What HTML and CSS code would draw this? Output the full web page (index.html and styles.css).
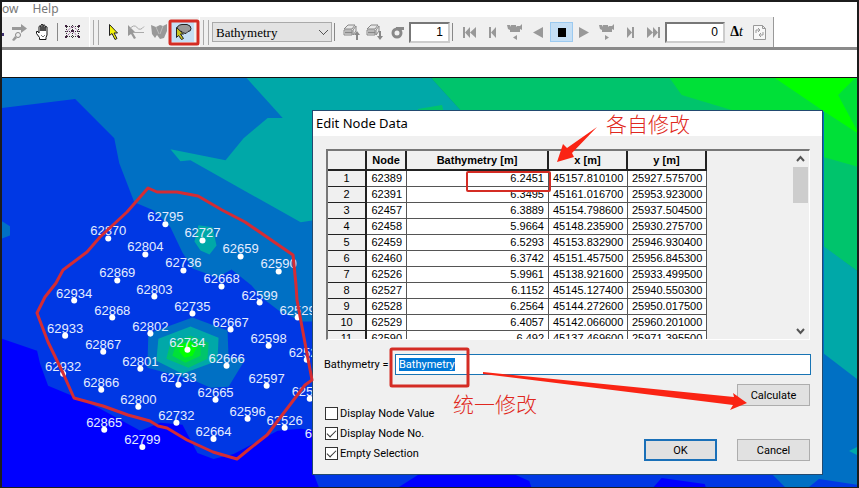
FILE: index.html
```html
<!DOCTYPE html>
<html lang="en">
<head>
<meta charset="utf-8">
<title>Edit Node Data</title>
<link rel="stylesheet" href="styles.css">
</head>
<body>
<div class="app">
  <nav class="menubar"><a href="#">ow</a><a href="#">Help</a></nav>

  <div class="toolbar">
    <div class="group">
      <span class="cut"></span>
      <button class="tool" aria-label="Zoom next"><svg viewBox="0 0 23 20"><g fill="#999"><path d="M4 5h9V2l6 4.500-6 4.500V8H4z"/><path d="M7 14l2 2-3 3-2-1z"/></g><circle cx="10" cy="13" r="2.500" fill="#eee" stroke="#888"/></svg></button>
      <button class="tool" aria-label="Pan"><svg viewBox="0 0 23 20"><path d="M8.500 17.500v-2l-3-4v-2h1.500l1 1.500V4.500q1-1.500 2 0V9 3q1-1.500 2 0v6-5.500q1-1.500 2 0V9 5q1-1 2 0v8l-1 2.500v2z" fill="#fff" stroke="#111"/><path d="M10 13l2 2 2-2" stroke="#777" fill="none"/></svg></button>
      <span class="sep"></span>
      <button class="tool" aria-label="Mesh"><svg viewBox="0 0 23 20"><path d="M4 4.500h15M4 9.500h15M4 14.500h15M5.500 3v14M11.500 3v14M17.500 3v14" stroke="#333" stroke-dasharray="1 1"/><path d="M5 10l7-6 6 6M5 15l6-6 7 6" stroke="#a060a0" fill="none" stroke-dasharray="2 1"/><path d="M4 3h2v2H4zM10 8h3v2h-3zM17 3h2v2h-2zM4 14h2v2H4zM17 14h2v2h-2z" fill="#402040"/></svg></button>
    </div>
    <div class="group tools">
      <span class="grip"></span>
      <button class="tool" aria-label="Select"><svg viewBox="0 0 23 20"><path d="M7.500 2.500v11l2.500-2 3 6 2-1-3-5.500h3.500z" fill="#f2f20c" stroke="#222"/></svg></button>
      <button class="tool" aria-label="Select along line"><svg viewBox="0 0 23 20"><path d="M3 3v11l3-2 3 5 2-1-3-5h3z" fill="#999"/><path d="M4 7.500q5-6 8-2t7-1M8 10.500h11" stroke="#aaa" fill="none"/></svg></button>
      <button class="tool" aria-label="Select polygon"><svg viewBox="0 0 23 20"><path d="M3 3l5 2 4-2 3 1 4-2v7l-3 7-4 1-3-4-2 3-3-4z" fill="#999"/><path d="M8 5l3 7M15 4l-3 8" stroke="#bbb"/></svg></button>
      <button class="tool active" aria-label="Select by lasso" aria-pressed="true"><svg viewBox="0 0 23 20"><path d="M6 7q0-4 5-4.500h5q4 1 4 4 0 3-3 3l-2 2q-3 0-4-2-5 0-5-2.500z" fill="#999" stroke="#222"/><path d="M5.500 5.500v10l2-2 3 4 2-1-3-4.500h3z" fill="#c8c420" stroke="#222"/></svg></button>
    </div>
    <div class="group item">
      <span class="grip"></span>
      <select class="dataset" aria-label="Item"><option>Bathymetry</option></select>
      <span class="sep wide"></span>
      <button class="tool" aria-label="Layer up"><svg viewBox="0 0 23 20"><path d="M4 7l4-4h7l-3 4zM4 8h8v5H4zM13 8l3-4v5l-3 4z" fill="#e8e8e8" stroke="#888"/><path d="M5 10.500h7" stroke="#888" stroke-width="2"/><path d="M16 18v-5h-2l3-4 3 4h-2v5z" fill="#888"/></svg></button>
      <button class="tool" aria-label="Layer down"><svg viewBox="0 0 23 20"><path d="M4 7l4-4h7l-3 4zM4 8h8v5H4zM13 8l3-4v5l-3 4z" fill="#e8e8e8" stroke="#888"/><path d="M5 10.500h7" stroke="#888" stroke-width="2"/><path d="M16 9v5h-2l3 4 3-4h-2V9z" fill="#888"/></svg></button>
      <button class="tool" aria-label="Sigma layer"><svg viewBox="0 0 23 20"><path d="M10 6.500h8" stroke="#888" stroke-width="3"/><ellipse cx="11" cy="11" rx="4" ry="4" fill="none" stroke="#888" stroke-width="3"/></svg></button>
      <input class="field layer" aria-label="Layer" value="1">
      <span class="sep wide"></span>
      <button class="tool" aria-label="First step"><svg viewBox="0 0 23 20"><path d="M5 5h2v11H5zM12 5v11l-5-5.500zM18 5v11l-6-5.500z" fill="#999"/></svg></button>
      <button class="tool" aria-label="Previous step"><svg viewBox="0 0 23 20"><path d="M8 5h2v11H8zM15 5v11l-5-5.500z" fill="#999"/></svg></button>
      <button class="tool" aria-label="Record backwards"><svg viewBox="0 0 23 20"><path d="M3 3h3l1 2V3h5v2l1-1h3l2-2v6l-2-1v3H6V8L4 7zM13 13v5l-4-2.500z" fill="#999"/></svg></button>
      <button class="tool" aria-label="Play backwards"><svg viewBox="0 0 23 20"><path d="M16 5v11L6 10.500z" fill="#999"/></svg></button>
      <button class="tool active stop" aria-label="Stop" aria-pressed="true"><svg viewBox="0 0 23 20"><path d="M8 6h8v9H8z"/></svg></button>
      <button class="tool" aria-label="Play"><svg viewBox="0 0 23 20"><path d="M6 5v11l10-5.500z" fill="#999"/></svg></button>
      <button class="tool" aria-label="Record"><svg viewBox="0 0 23 20"><path d="M3 3h3l1 2V3h5v2l1-1h3l2-2v6l-2-1v3H6V8L4 7zM9 13v5l4-2.500z" fill="#999"/></svg></button>
      <button class="tool" aria-label="Next step"><svg viewBox="0 0 23 20"><path d="M13 5h2v11h-2zM8 5v11l5-5.500z" fill="#999"/></svg></button>
      <button class="tool" aria-label="Last step"><svg viewBox="0 0 23 20"><path d="M16 5h2v11h-2zM11 5v11l5-5.500zM5 5v11l6-5.500z" fill="#999"/></svg></button>
      <input class="field step" aria-label="Time step" value="0">
      <button class="tool delta" aria-label="Time step length"><b>Δ</b><i>t</i></button>
      <button class="tool" aria-label="Refresh"><svg viewBox="0 0 23 20"><path d="M5.500 3.500h9l3 3v11h-12zM14.500 3.500v3h3" fill="#f7f7f7" stroke="#999"/><path d="M8 11V8h4M10 6l2 2-2 2M15 10v3h-4M13 11l-2 2 2 2" fill="none" stroke="#999"/></svg></button>
    </div>
  </div>
  <div class="strip"></div>

  <main class="map">
    <svg class="mesh" viewBox="2 78 855 408" preserveAspectRatio="xMinYMin slice" role="img" aria-label="Bathymetry mesh">
      <path class="c3" d="M2 78h855v408H2z"/>
      <path class="c2" d="M2 108L75 99l39 39 5 25 15 39 19 8 17 17 12 25 10 16 25 9 14-8 20 16 10 12 17 13 23 11h13l20 151h435l14 14H2z"/>
      <path class="c2" d="M807 486l10-8 40 6v2z"/>
      <path class="c3" d="M2 221l8 5v9l-8 3z"/>
      <path class="c1" d="M2 338l35 12 3 13 8 22 24 10 28 13 40 22 20-8 22 2 15 28 16 6 20-5 44-23 23-2 13 2v43l5 13H2zM398 486l22-14h90l18 8 2 6zM652 486l8-9 43 6 1 3z"/>
      <path class="c4" d="M246 78l36 40h-15l-24 20-18 22-55-11 10 12 10-1 110 62 13-2V111h147l-30-33z"/>
      <path class="c5" d="M430 78l30 33-18-1-1-5-24 4v3h405v135l35 25V78z"/>
      <path class="c4" d="M822 246l35 26v108l-35-27zM847 450l10-5v10z"/>
      <path class="c6" d="M668 78l12 17 53 16h89v46l35 10V78z"/>
      <path class="c7" d="M773 78l50 34 34 22-21-39 17-17z"/>
      <path class="c3" d="M148 333l44-16 35 13 1 27 17 1-17 28-18 1-18-8-45-12z"/>
      <path class="c4" d="M158 338l32-12 28 11-1 23-35 13-26-13zM198 225l14 2 4 18-7 9-9-4-6-9z"/>
      <path class="c5" d="M170 342l20-7 18 7-1 16-19 9-22-9z"/>
      <path class="c6" d="M175 345l15-5 10 5v10l-15 7-13-7z"/>
      <path class="c7" d="M180 344l10-3 6 6-4 8-8 2-5-6z"/>
      <g class="dots">
        <circle cx="165" cy="224" r="3"/><circle cx="108" cy="238" r="3"/><circle cx="202" cy="240" r="3"/><circle cx="145" cy="254" r="3"/><circle cx="240" cy="256" r="3"/><circle cx="183" cy="270" r="3"/><circle cx="278" cy="271" r="3"/><circle cx="117" cy="280" r="3"/><circle cx="221" cy="286" r="3"/><circle cx="74" cy="300" r="3"/><circle cx="154" cy="296" r="3"/><circle cx="259" cy="302" r="3"/><circle cx="112" cy="317" r="3"/><circle cx="192" cy="313" r="3"/><circle cx="297" cy="317" r="3"/><circle cx="65" cy="335" r="3"/><circle cx="150" cy="333" r="3"/><circle cx="230" cy="329" r="3"/><circle cx="103" cy="351" r="3"/><circle cx="187" cy="349" r="3"/><circle cx="268" cy="345" r="3"/><circle cx="306" cy="359" r="3"/><circle cx="63" cy="373" r="3"/><circle cx="140" cy="368" r="3"/><circle cx="226" cy="365" r="3"/><circle cx="101" cy="389" r="3"/><circle cx="178" cy="384" r="3"/><circle cx="266" cy="385" r="3"/><circle cx="309" cy="398" r="3"/><circle cx="138" cy="406" r="3"/><circle cx="215" cy="399" r="3"/><circle cx="247" cy="418" r="3"/><circle cx="284" cy="427" r="3"/><circle cx="176" cy="422" r="3"/><circle cx="104" cy="429" r="3"/><circle cx="142" cy="446" r="3"/><circle cx="213" cy="438" r="3"/>
      </g>
      <g class="nodes">
        <text x="165" y="221">62795</text><text x="108" y="235">62870</text><text x="202" y="237">62727</text><text x="145" y="251">62804</text><text x="240" y="253">62659</text><text x="183" y="267">62736</text><text x="278" y="268">62590</text><text x="117" y="277">62869</text><text x="221" y="283">62668</text><text x="74" y="297">62934</text><text x="154" y="293">62803</text><text x="259" y="299">62599</text><text x="112" y="314">62868</text><text x="192" y="310">62735</text><text x="297" y="314">62529</text><text x="65" y="332">62933</text><text x="150" y="330">62802</text><text x="230" y="326">62667</text><text x="103" y="348">62867</text><text x="187" y="346">62734</text><text x="268" y="342">62598</text><text x="306" y="356">62528</text><text x="63" y="370">62932</text><text x="140" y="365">62801</text><text x="226" y="362">62666</text><text x="101" y="386">62866</text><text x="178" y="381">62733</text><text x="266" y="382">62597</text><text x="309" y="395">62527</text><text x="138" y="403">62800</text><text x="215" y="396">62665</text><text x="247" y="415">62596</text><text x="284" y="424">62526</text><text x="176" y="419">62732</text><text x="104" y="426">62865</text><text x="142" y="443">62799</text><text x="213" y="435">62664</text><text x="322" y="437">62460</text>
      </g>
    </svg>

    <section class="dialog" role="dialog" aria-labelledby="dialog-title">
      <h1 id="dialog-title">Edit Node Data</h1>
      <form class="content">
        <div class="grid">
          <div class="rows">
            <table>
              <colgroup><col class="w-num"><col class="w-node"><col class="w-value"><col class="w-pos"><col class="w-pos"></colgroup>
              <thead><tr><th></th><th>Node</th><th>Bathymetry [m]</th><th>x [m]</th><th>y [m]</th></tr></thead>
              <tbody>
                <tr><th>1</th><td>62389</td><td>6.2451</td><td>45157.810100</td><td>25927.575700</td></tr>
                <tr><th>2</th><td>62391</td><td>6.3495</td><td>45161.016700</td><td>25953.923000</td></tr>
                <tr><th>3</th><td>62457</td><td>6.3889</td><td>45154.798600</td><td>25937.504500</td></tr>
                <tr><th>4</th><td>62458</td><td>5.9664</td><td>45148.235900</td><td>25930.275700</td></tr>
                <tr><th>5</th><td>62459</td><td>6.5293</td><td>45153.832900</td><td>25946.930400</td></tr>
                <tr><th>6</th><td>62460</td><td>6.3742</td><td>45151.457500</td><td>25956.845300</td></tr>
                <tr><th>7</th><td>62526</td><td>5.9961</td><td>45138.921600</td><td>25933.499500</td></tr>
                <tr><th>8</th><td>62527</td><td>6.1152</td><td>45145.127400</td><td>25940.550300</td></tr>
                <tr><th>9</th><td>62528</td><td>6.2564</td><td>45144.272600</td><td>25950.017500</td></tr>
                <tr><th>10</th><td>62529</td><td>6.4057</td><td>45142.066000</td><td>25960.201000</td></tr>
                <tr><th>11</th><td>62590</td><td>6.492</td><td>45137.469600</td><td>25971.395500</td></tr>
              </tbody>
            </table>
          </div>
          <div class="scrollbar">
            <svg viewBox="0 0 15 16"><path d="M4 10l3.500-4 3.500 4" /></svg>
            <span class="thumb"></span>
            <svg class="down" viewBox="0 0 15 16"><path d="M4 6l3.500 4L11 6" /></svg>
          </div>
        </div>
        <div class="formula">
          <label for="formula">Bathymetry =</label>
          <input id="formula" value="Bathymetry">
        </div>
        <div class="bottom">
          <div class="checks">
            <label><input type="checkbox">Display Node Value</label>
            <label><input type="checkbox" checked>Display Node No.</label>
            <label><input type="checkbox" checked>Empty Selection</label>
          </div>
          <div class="actions">
            <button type="button" class="push">Calculate</button>
            <div class="pair">
              <button type="button" class="push default">OK</button>
              <button type="button" class="push">Cancel</button>
            </div>
          </div>
        </div>
      </form>
    </section>
  </main>

  <svg class="notes" viewBox="0 0 859 488" preserveAspectRatio="xMinYMin meet">
    <path class="lasso" d="M148 188l9 4h20l21 4 24 14 23 12 48 33 3 30 1 15 8 43 7 37-7 5-38 50-19 15-11 9-24-7-26-12-20-12-9-2-8-5-22-6-25-9-29-8-11-25-15-31-11-29 8-16 11-14 7-13 24-18 13-15 27-25z"/>
    <rect class="frame" x="170" y="21" width="28" height="23" rx="1"/>
    <rect class="frame thin" x="467" y="172" width="83" height="19" rx="1"/>
    <rect class="frame" x="391" y="349" width="77" height="37" rx="1"/>
    <path class="arrow" d="M557 162l6-18 4 4 30-21-25 26 2 4z"/>
    <path class="arrow" d="M483 372l251 25-1-4 14 10-17 7 3-5-250-31z"/>
    <text x="606" y="132">各自修改</text>
    <text x="453" y="412">统一修改</text>
  </svg>
</div>
<script>
  const formula = document.getElementById('formula');
  formula.focus();
  formula.select();
</script>
</body>
</html>
```
FILE: styles.css
```css
* { box-sizing: border-box; }

body { margin: 0; }

.app {
  position: relative;
  display: flex;
  flex-direction: column;
  min-height: 100vh;
  overflow: hidden;
  border: 2px solid #1c1c1c;
  border-bottom-width: 1px;
  background: #fff;
  font-family: Roboto, "Liberation Sans", sans-serif;
  font-size: 11px;
}

button, input, select { font: inherit; color: #000; }

.menubar {
  display: flex;
  gap: 14px;
  height: 15px;
  font: 12px/14px "Noto Sans", sans-serif;
}

.menubar a { color: #777; text-decoration: none; }

.toolbar {
  display: flex;
  height: 33px;
  border-bottom: 3px solid #8a8a8a;
}

.group {
  display: flex;
  align-items: center;
  padding: 2px 5px 2px 0;
  border-right: 1px solid #fff;
  background: #f0f0f0;
}

.group.item { padding-right: 2px; border-right-color: #999; }

.cut {
  width: 6px;
  height: 14px;
  background: linear-gradient(#403070, #403070) 0 8px / 2px 3px no-repeat;
}

.grip {
  width: 6px;
  height: 25px;
  margin: 0 3px;
  border: solid #aaa;
  border-width: 0 1px;
}

.sep {
  width: 1px;
  height: 18px;
  margin: 0 3px;
  background: #888;
}

.sep.wide { margin: 0 5px 0 2px; }

.tool {
  display: flex;
  justify-content: center;
  align-items: center;
  width: 23px;
  height: 20px;
  padding: 0;
  border: 0;
  background: none;
}

.tool svg { width: 23px; height: 20px; }
.tool.active { background: #c5dff5; }
.tool.stop { box-shadow: inset 0 0 0 1px #9ccaf0; }
.delta { font: 14px "Liberation Serif", serif; }

.dataset {
  appearance: none;
  width: 120px;
  height: 20px;
  padding: 0 3px;
  border: 1px solid #aaa;
  border-radius: 0;
  background: #e3e3e3;
  background-image: linear-gradient(45deg, transparent 47%, #555 47% 58%, transparent 58%), linear-gradient(-45deg, transparent 47%, #555 47% 58%, transparent 58%);
  background-position: 106px 7px, 110px 7px;
  background-size: 5px 5px;
  background-repeat: no-repeat;
  font: 13px "Liberation Serif", serif;
}

.field {
  height: 21px;
  padding: 0 5px;
  border: 2px solid #777;
  border-right-color: #ccc;
  border-bottom-color: #ccc;
  background: #fff;
  font: 12px "Liberation Sans", sans-serif;
  text-align: right;
}

.layer { width: 41px; }
.step { width: 60px; }

.strip { height: 28px; border-bottom: 1px solid #111; }

.map { position: relative; flex: 1; }

.mesh {
  position: absolute;
  inset: 0;
  width: 100%;
  height: 100%;
}

.c1 { fill: #0000ff; }
.c2 { fill: #0038e4; }
.c3 { fill: #0070c4; }
.c4 { fill: #00a8a8; }
.c5 { fill: #00c46c; }
.c6 { fill: #00e038; }
.c7 { fill: #00ff00; }
.dots { fill: #fff; }

.nodes {
  fill: #e4ecff;
  font: 13px "Liberation Sans", sans-serif;
  text-anchor: middle;
}

.dialog {
  position: absolute;
  top: 32px;
  left: 310px;
  width: 511px;
  border: 1px solid #224a70;
  background: #f0f0f0;
}

.dialog h1 {
  margin: 0;
  padding: 0 3px;
  background: #fff;
  font: 13px/25px "Noto Sans", sans-serif;
}

.content { padding: 13px 11px; }

.grid {
  display: flex;
  height: 191px;
  margin: 0 1px 0 2px;
  border: solid #fff;
  border-width: 2px 1px 1px 2px;
  border-top-color: #777;
  border-left-color: #777;
}

.rows { flex: 1; overflow: hidden; }

table {
  table-layout: fixed;
  width: 379px;
  border-spacing: 0;
  font: 11px "Liberation Sans", sans-serif;
}

.w-num { width: 39px; }
.w-node { width: 40px; }
.w-value { width: 142px; }
.w-pos { width: 79px; }

th, td {
  height: 16px;
  padding: 0 4px;
  border: solid #555;
  border-width: 0 1px 1px 0;
  background: #fff;
  line-height: 15px;
  text-align: right;
  white-space: nowrap;
}

th {
  border-width: 0 2px 1px 0;
  border-color: #222;
  background: #f0f0f0;
  font-weight: normal;
  text-align: center;
}

thead th { height: 20px; border-bottom-width: 2px; font-weight: bold; }

.scrollbar {
  display: flex;
  flex-direction: column;
  width: 17px;
  padding: 0 1px;
}

.scrollbar svg {
  width: 15px;
  height: 16px;
  fill: none;
  stroke: #555;
  stroke-width: 2;
}

.thumb { height: 36px; background: #cdcdcd; }
.scrollbar .down { margin-top: auto; }

.formula {
  display: flex;
  align-items: center;
  margin-top: 14px;
}

.formula label { width: 71px; white-space: nowrap; }

.formula input {
  flex: 1;
  min-width: 0;
  height: 21px;
  padding: 0 3px;
  border: 1px solid #1874b4;
  outline: none;
  background: #fff;
}

.formula input::selection { background: #0078d7; color: #fff; }

.bottom {
  display: flex;
  justify-content: space-between;
  margin-top: 9px;
  padding-right: 1px;
}

.checks {
  display: flex;
  flex-direction: column;
  gap: 7px;
  padding-top: 23px;
}

.checks label {
  display: flex;
  align-items: center;
  gap: 2px;
  height: 13px;
}

.checks input {
  appearance: none;
  width: 13px;
  height: 13px;
  margin: 0 0 0 1px;
  border: 1px solid #333;
  background: #fff;
}

.checks input:checked::before {
  content: "";
  display: block;
  width: 8px;
  height: 4px;
  margin: 2px 0 0 1px;
  border: solid #333;
  border-width: 0 0 1px 1px;
  transform: rotate(-45deg);
}

.actions {
  display: flex;
  flex-direction: column;
  justify-content: space-between;
  align-items: flex-end;
  gap: 33px;
}

.pair { display: flex; gap: 20px; }

.push {
  width: 73px;
  height: 22px;
  padding: 0;
  border: 1px solid #adadad;
  background: #e1e1e1;
}

.push.default { border: 2px solid #1a70b8; }

.notes {
  position: absolute;
  top: -2px;
  left: -2px;
  width: 100vw;
  height: 100vh;
  pointer-events: none;
}

.lasso { fill: none; stroke: #d42c34; stroke-width: 3; stroke-linejoin: round; }
.frame { fill: none; stroke: #d42c24; stroke-width: 3; }
.thin { stroke-width: 2; }
.arrow { fill: #fa2414; }

.notes text {
  fill: #e02820;
  font: 300 21px "Noto Sans CJK SC", sans-serif;
}
```
